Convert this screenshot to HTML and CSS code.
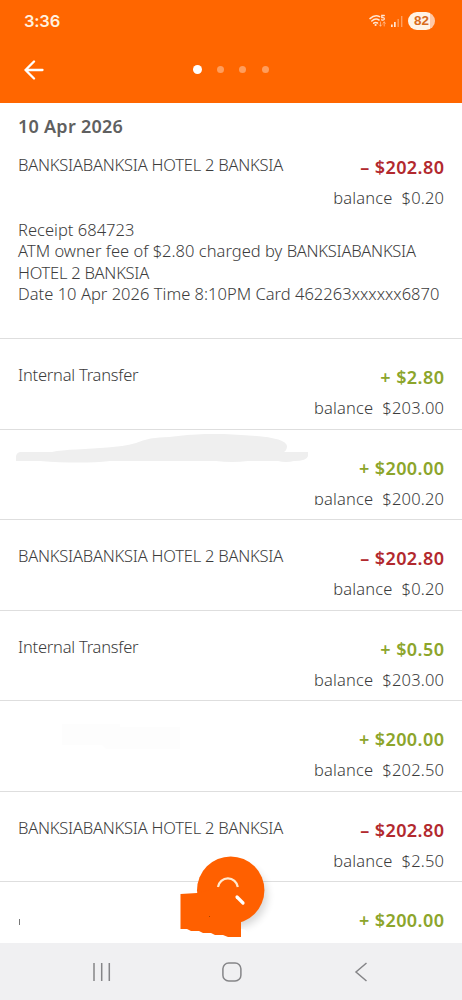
FILE: index.html
```html
<!DOCTYPE html>
<html lang="en">
<head>
<meta charset="utf-8">
<title>Transactions</title>
<link rel="stylesheet" href="styles.css">
</head>
<body>
<div class="phone">
  <header class="header">
    <div class="status">
      <span class="clock">3:36</span>
      <span class="indicators">
        <svg class="wifi" width="18" height="14" viewBox="0 0 18 14" fill="none" stroke="#ffe6d2" stroke-linecap="round">
          <path d="M1 4.6Q5.6.3 10.6 2.6M2.8 7Q6.400 3.700 10 6M4.700 9.200Q6.500 7.700 8.500 9" stroke-width="1.500"/>
          <circle cx="6.600" cy="11" r="1.100" fill="#ffe6d2" stroke="none"/>
          <path d="M15.300 1.500H12.800V3.600Q15.500 3.200 15.300 5Q15 6.600 12.600 5.800" stroke-width="1.300"/>
          <path d="M11.500 8V12M10.200 10.800L11.500 12.200L12.800 10.800M15.200 12V8M13.900 9.300L15.200 8L16.500 9.300" stroke-width=".9" opacity=".6"/>
        </svg>
        <svg class="signal" width="12" height="13" viewBox="0 0 12 13" fill="#ffe6d2">
          <rect x="0" y="9.500" width="1.700" height="2.500"/><rect x="3" y="7" width="1.700" height="5"/>
          <rect x="6.500" y="4" width="1.400" height="8" opacity=".45"/><rect x="10" y="1" width="1.400" height="11" opacity=".45"/>
        </svg>
        <span class="battery">82</span>
      </span>
    </div>
    <div class="toolbar">
      <svg class="back" width="20" height="20" viewBox="0 0 20 20" fill="none" stroke="#fff" stroke-width="2.300" stroke-linecap="round" stroke-linejoin="round"><path d="M10 1.500L1.500 10L10 18.500M1.500 10H18.500"/></svg>
      <span class="dots"><i class="dot active"></i><i class="dot"></i><i class="dot"></i><i class="dot"></i></span>
    </div>
  </header>

  <main class="list">
    <h1 class="date">10 Apr 2026</h1>
    <section class="row first">
      <div class="name">BANKSIABANKSIA HOTEL 2 BANKSIA</div>
      <div class="amounts"><div class="amount debit">– $202.80</div><div class="balance">balance&nbsp; $0.20</div></div>
      <div class="details">
        <div>Receipt 684723</div>
        <div>ATM owner fee of $2.80 charged by <span class="caps">BANKSIABANKSIA</span></div>
        <div class="caps">HOTEL 2 BANKSIA</div>
        <div>Date 10 Apr 2026 Time 8:10PM Card 462263xxxxxx6870</div>
      </div>
    </section>
    <section class="row">
      <div class="name">Internal Transfer</div>
      <div class="amounts"><div class="amount">+ $2.80</div><div class="balance">balance&nbsp; $203.00</div></div>
    </section>
    <section class="row">
      <div class="name"><svg class="smudge" width="294" height="30" viewBox="0 0 294 30"><path fill="#efefef" d="M0 22Q1 18 5 18H36Q45 16 61 15.500C82 14 102 14 120 9Q133 3 153 3Q190-2 225 1Q270 3 271 12Q271 16 268 18H292V22Q291 27 278 27Q270 29 262 27H232Q216 29 200 27H94Q65 30 24 27H0Z"/></svg></div>
      <div class="amounts"><div class="amount">+ $200.00</div><div class="balance"><span class="clipped">b</span>alance&nbsp; $200.20</div></div>
    </section>
    <section class="row">
      <div class="name">BANKSIABANKSIA HOTEL 2 BANKSIA</div>
      <div class="amounts"><div class="amount debit">– $202.80</div><div class="balance">balance&nbsp; $0.20</div></div>
    </section>
    <section class="row">
      <div class="name">Internal Transfer</div>
      <div class="amounts"><div class="amount">+ $0.50</div><div class="balance">balance&nbsp; $203.00</div></div>
    </section>
    <section class="row">
      <div class="name"><svg class="trace" width="120" height="28" viewBox="0 0 120 28"><path fill="#fdfdfd" d="M0 2H58V5H118V27H44L40 23H0Z"/></svg></div>
      <div class="amounts"><div class="amount">+ $200.00</div><div class="balance">balance&nbsp; $202.50</div></div>
    </section>
    <section class="row">
      <div class="name">BANKSIABANKSIA HOTEL 2 BANKSIA</div>
      <div class="amounts"><div class="amount debit">– $202.80</div><div class="balance">balance&nbsp; $2.50</div></div>
    </section>
    <section class="row">
      <div class="name"><i class="tick"></i></div>
      <div class="amounts"><div class="amount">+ $200.00</div></div>
    </section>
  </main>

  <svg class="search" width="110" height="95" viewBox="0 0 110 95">
    <defs><filter id="shade" x="-30%" y="-30%" width="160%" height="160%"><feGaussianBlur stdDeviation="4"/></filter></defs>
    <circle cx="56" cy="46" r="31" fill="#000" opacity=".16" filter="url(#shade)"/>
    <path d="M61 79Q69 79 69 88L67 93H60Z" fill="#fff"/>
    <circle cx="50.700" cy="40.200" r="33.700" fill="#ff6000"/>
    <path d="M38 37A10 10 0 0 1 57.800 37" fill="none" stroke="#ffe9cf" stroke-width="2.200"/>
    <path d="M57 47L63 53" stroke="#fff" stroke-width="3.200" stroke-linecap="round"/>
    <path d="M.5 44L17 43L38 38Q45 32 53 35Q58 40 54 45L47 51V68H61V87H48L43 85H35L31 83H23L19 81H11L7 79H.5Z" fill="#ff6000"/>
    <circle cx="29.500" cy="66.500" r=".5" fill="#903800"/>
  </svg>

  <nav class="nav">
    <svg width="20" height="20" viewBox="0 0 20 20" stroke="#858588" stroke-width="1.500"><path d="M2 1V19M9.700 1V19M17.300 1V19"/></svg>
    <svg width="20" height="20" viewBox="0 0 20 20" fill="none" stroke="#858588" stroke-width="1.500"><rect x=".9" y="1" width="18" height="18" rx="5.800"/></svg>
    <svg width="20" height="20" viewBox="0 0 20 20" fill="none" stroke="#858588" stroke-width="1.500"><path d="M15.500 1L5 10L15.500 19"/></svg>
  </nav>
</div>
</body>
</html>
```
FILE: styles.css
```css
* { box-sizing: border-box; }
body { margin: 0; background: #fff; font-family: "Noto Sans", sans-serif; color: #3c3c3c; }
.phone { position: relative; width: 462px; height: 1000px; overflow: hidden; display: flex; flex-direction: column; }
.header { flex: none; height: 103px; background: #ff6600; }
.status { height: 42px; padding: 0 27px 0 24px; display: flex; align-items: center; justify-content: space-between; }
.clock { font: 600 16.5px/20px Inter, sans-serif; letter-spacing: -.2px; color: #fff0df; }
.indicators { display: flex; align-items: center; }
.signal { margin: 1px 5px 0 4px; }
.battery { width: 27px; height: 18px; border-radius: 9px; background: linear-gradient(90deg, #fff3e6 82%, #ffc8a6 82%); color: #d96b1c; font: 700 13.5px/18px "Liberation Sans", sans-serif; text-align: center; }
.toolbar { height: 55px; padding-left: 24px; display: grid; grid-template-columns: 168.600px auto; align-items: center; }
.dots { display: flex; align-items: center; gap: 15.400px; }
.dot { width: 7px; height: 7px; border-radius: 50%; background: #ff9d5c; }
.dot.active { width: 9px; height: 9px; background: #fff; }
.list { flex: 1; min-height: 0; overflow: hidden; }
.date { margin: 0; height: 25px; padding: 11px 18px 0; font-size: 18px; font-weight: 600; line-height: 25px; letter-spacing: .25px; color: #606060; white-space: nowrap; }
.row { height: 90.500px; padding: 0 18px; display: grid; grid-template-columns: 1fr auto; grid-template-rows: 90px auto; border-top: 1px solid #dedede; font-size: 16.5px; font-weight: 350; }
.row.first { height: 210.200px; border-top-color: transparent; }
.name { padding-top: 25px; line-height: 22px; letter-spacing: -.23px; white-space: nowrap; }
.amounts { padding-top: 25px; text-align: right; white-space: nowrap; }
.amount { font-size: 18px; font-weight: 600; line-height: 26px; letter-spacing: .42px; margin-right: -.42px; color: #8ca52b; }
.amount.debit { color: #b2292e; }
.balance { padding-top: 7px; line-height: 21px; letter-spacing: .18px; margin-right: -.18px; }
.details { grid-column: 1 / -1; line-height: 21.300px; letter-spacing: .02px; white-space: nowrap; }
.caps { letter-spacing: -.26px; }
.clipped { display: inline-block; clip-path: inset(8px 0 0); }
.smudge { display: block; margin: -21px 0 0 -2px; }
.trace { display: block; margin: -4px 0 0 44px; }
.tick { display: block; width: 1px; height: 6px; margin: 12px 0 0 1px; background: #777; }
.search { position: absolute; left: 180px; top: 850px; }
.nav { flex: none; height: 57px; padding: 1px 91px 0 92px; display: flex; justify-content: space-between; align-items: center; background: #f0f0f2; }
```
